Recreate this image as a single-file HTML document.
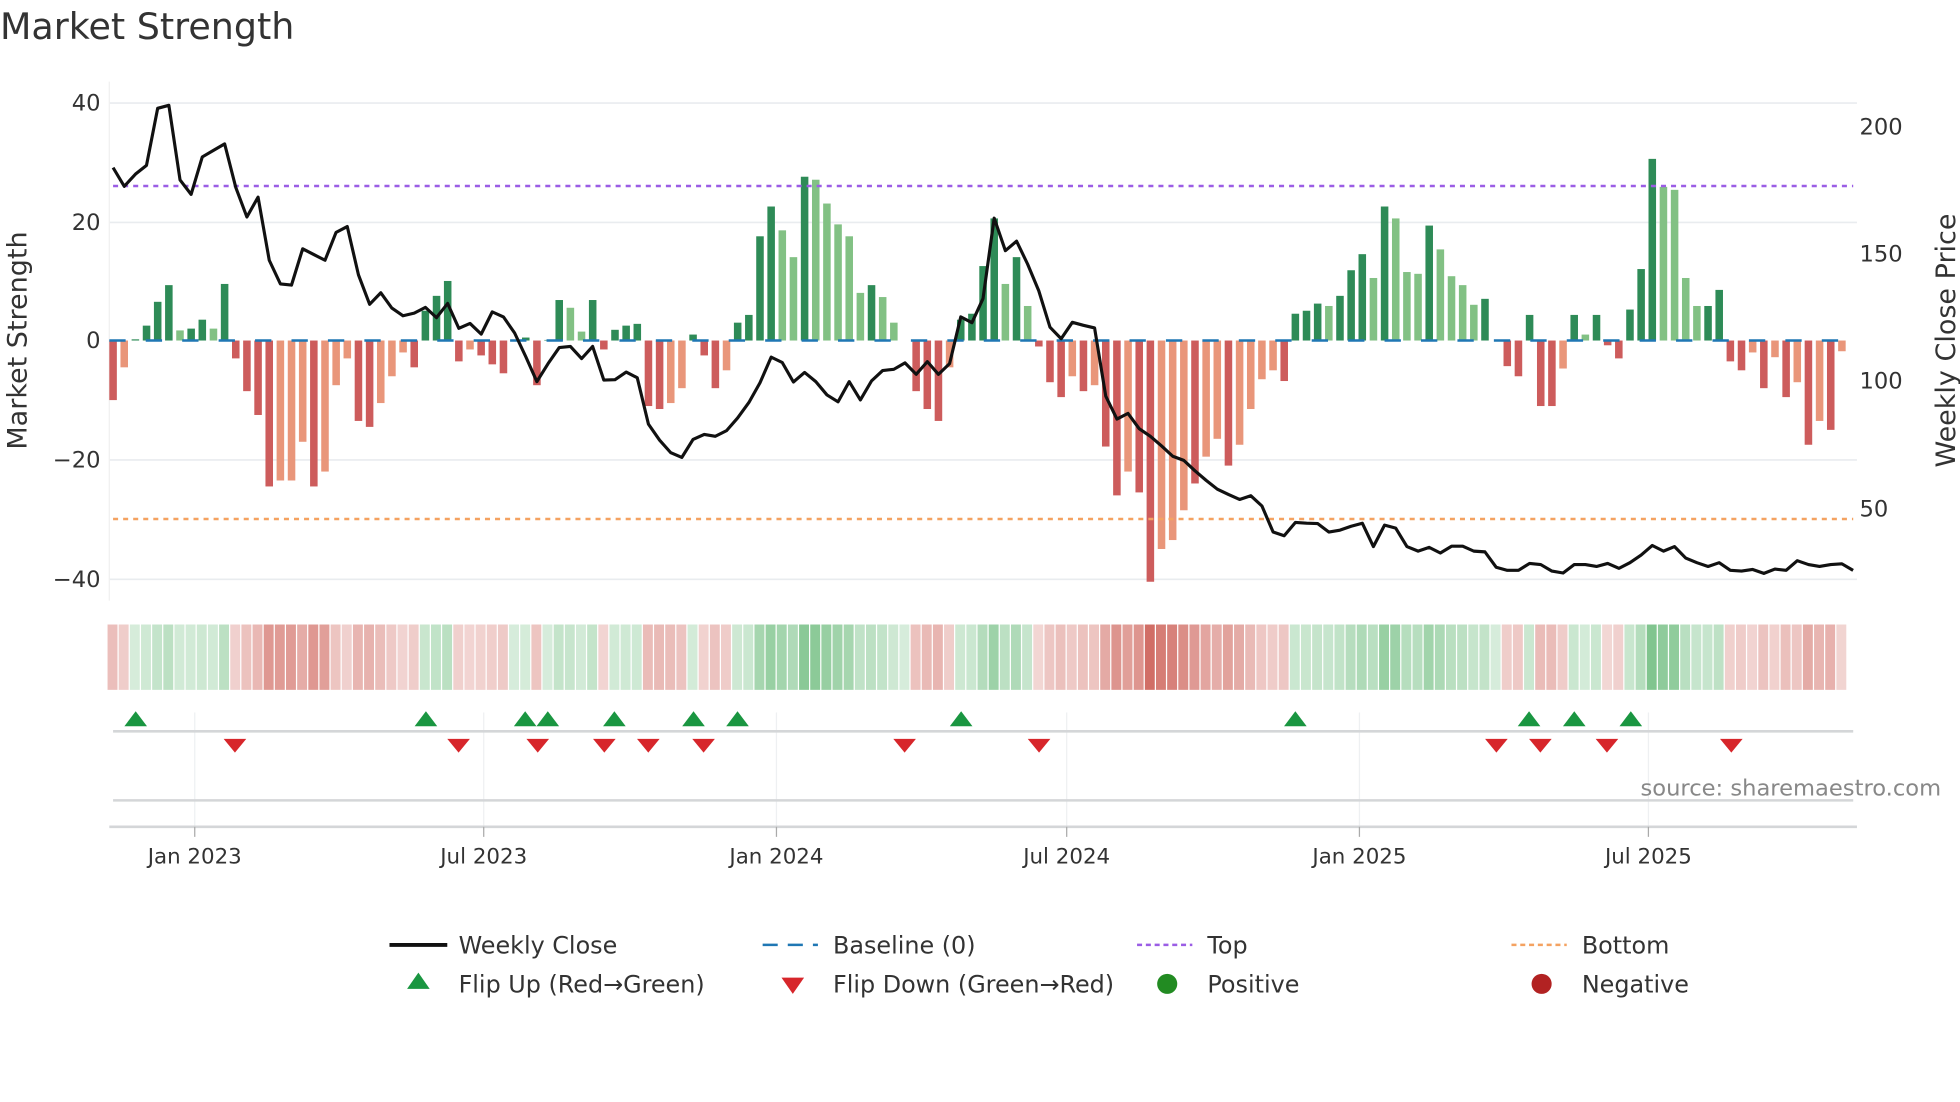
<!DOCTYPE html>
<html><head><meta charset="utf-8"><style>
html,body{margin:0;padding:0;background:#fff;}
svg{display:block;}
text{font-family:"DejaVu Sans","Liberation Sans",sans-serif;fill:#333;}
</style></head><body>
<svg id="s" width="1960" height="1102" viewBox="0 0 1560 877" preserveAspectRatio="none" xmlns="http://www.w3.org/2000/svg">
<rect width="1560" height="877" fill="#fff"/>
<text x="0" y="31" font-size="29">Market Strength</text>
<g stroke="#e9ecef" stroke-width="1.3">
<line x1="87" x2="1478" y1="82" y2="82"/><line x1="87" x2="1478" y1="177" y2="177"/>
<line x1="87" x2="1478" y1="366" y2="366"/><line x1="87" x2="1478" y1="461" y2="461"/>
</g>
<line x1="87" x2="87" y1="65" y2="478" stroke="#f0f0f0"/>
<g font-size="18" text-anchor="end">
<text x="80" y="88">40</text><text x="80" y="183">20</text><text x="80" y="277">0</text>
<text x="80" y="372">−20</text><text x="80" y="467">−40</text>
</g>
<g font-size="18">
<text x="1480" y="107">200</text><text x="1480" y="208">150</text><text x="1480" y="309">100</text><text x="1480" y="411">50</text>
</g>
<text transform="translate(21,271) rotate(-90)" font-size="21.5" text-anchor="middle">Market Strength</text>
<text transform="translate(1556,271) rotate(-90)" font-size="21.5" text-anchor="middle">Weekly Close Price</text>
<g id="bars"></g>
<line x1="87" x2="1475" y1="271" y2="271" stroke="#1f77b4" stroke-width="2" stroke-dasharray="13,16"/>
<line x1="90" x2="1475" y1="148" y2="148" stroke="#9b5de5" stroke-width="2" stroke-dasharray="4,4"/>
<line x1="90" x2="1475" y1="413" y2="413" stroke="#f4a261" stroke-width="2" stroke-dasharray="4,4"/>
<polyline id="pl" fill="none" stroke="#111" stroke-width="2.5" stroke-linejoin="round"/>
<g id="heat"></g>
<g stroke="#eef0f2" stroke-width="1">
<line x1="155" x2="155" y1="567" y2="660"/><line x1="385" x2="385" y1="567" y2="660"/>
<line x1="618" x2="618" y1="567" y2="660"/><line x1="849" x2="849" y1="567" y2="660"/>
<line x1="1082" x2="1082" y1="567" y2="660"/><line x1="1312" x2="1312" y1="567" y2="660"/>
</g>
<line x1="90" x2="1475" y1="582" y2="582" stroke="#d4d6d8" stroke-width="2"/>
<line x1="90" x2="1475" y1="637" y2="637" stroke="#d4d6d8" stroke-width="2"/>
<line x1="87" x2="1478" y1="658" y2="658" stroke="#d4d6d8" stroke-width="2"/>
<g stroke="#aaa" stroke-width="1">
<line x1="155" x2="155" y1="658" y2="666"/><line x1="385" x2="385" y1="658" y2="666"/>
<line x1="618" x2="618" y1="658" y2="666"/><line x1="849" x2="849" y1="658" y2="666"/>
<line x1="1082" x2="1082" y1="658" y2="666"/><line x1="1312" x2="1312" y1="658" y2="666"/>
</g>
<g id="flips"></g>
<g font-size="17" text-anchor="middle">
<text x="155" y="687">Jan 2023</text><text x="385" y="687">Jul 2023</text><text x="618" y="687">Jan 2024</text>
<text x="849" y="687">Jul 2024</text><text x="1082" y="687">Jan 2025</text><text x="1312" y="687">Jul 2025</text>
</g>
<text x="1545" y="633" font-size="18" text-anchor="end" style="fill:#888">source: sharemaestro.com</text>
<g font-size="19">
<line x1="310" x2="356" y1="752" y2="752" stroke="#111" stroke-width="3"/>
<text x="365" y="759">Weekly Close</text>
<line x1="607" x2="651" y1="752" y2="752" stroke="#1f77b4" stroke-width="2" stroke-dasharray="12,8"/>
<text x="663" y="759">Baseline (0)</text>
<line x1="905" x2="949" y1="752" y2="752" stroke="#9b5de5" stroke-width="2" stroke-dasharray="4,3"/>
<text x="961" y="759">Top</text>
<line x1="1203" x2="1247" y1="752" y2="752" stroke="#f4a261" stroke-width="2" stroke-dasharray="4,3"/>
<text x="1259" y="759">Bottom</text>
<polygon points="333,774 342,787 324,787" fill="#1a9641"/>
<text x="365" y="790">Flip Up (Red→Green)</text>
<polygon points="622,778 640,778 631,791" fill="#d7262b"/>
<text x="663" y="790">Flip Down (Green→Red)</text>
<circle cx="929" cy="783" r="8" fill="#228b22"/>
<text x="961" y="790">Positive</text>
<circle cx="1227" cy="783" r="8" fill="#b22222"/>
<text x="1259" y="790">Negative</text>
</g>
</svg>
<script>
var b1=[[-10,0],[-4.5,1],[0.2,0],[2.5,0],[6.5,0],[9.3,0],[1.7,1],[2,0],[3.5,0],[2,1],[9.5,0],[-3,0],[-8.5,0],[-12.5,0],[-24.5,0],[-23.5,1],[-23.5,1],[-17,1],[-24.5,0],[-22,1],[-7.5,1],[-3,1],[-13.5,0],[-14.5,0],[-10.5,1],[-6,1],[-2,1],[-4.5,0],[5,0],[7.5,0],[10,0],[-3.5,0],[-1.5,1],[-2.5,0],[-4,0],[-5.5,0],[0,0],[0.5,0],[-7.5,0],[0.1,0],[6.8,0],[5.5,1],[1.5,1],[6.8,0],[-1.5,0],[1.8,0],[2.5,0],[2.8,0],[-11,0],[-11.5,0],[-10.5,1],[-8,1],[1,0],[-2.5,0],[-8,0],[-5,1],[3,0],[4.3,0],[17.5,0],[22.5,0],[18.5,1],[14,1],[27.5,0],[27,1],[23,1],[19.5,1],[17.5,1],[8,1],[9.3,0],[7.3,1],[3,1],[0,0],[-8.5,0],[-11.5,0],[-13.5,0],[-4.5,1],[3.5,0],[4.5,0],[12.5,0]];
var v2=[20.5,9.5,14,5.8,-1,-7,-9.5,-6,-8.5,-7.5,-17.8,-26,-22,-25.5,-40.5,-35,-33.5,-28.5,-24,-19.5,-16.5,-21,-17.5,-11.5,-6.5,-5,-6.8,4.5,5,6.2,5.8,7.5,11.8,14.5,10.5,22.5,20.5,11.5,11.2,19.3,15.3,10.8,9.3,6,7,0,-4.3,-6,4.3,-11,-11,-4.7,4.3,1,4.3,-0.8,-3,5.2,12,30.5,25.8,25.3,10.5,5.8,5.8,8.5,-3.5,-5,-2,-8,-2.8,-9.5,-7,-17.5,-13.5,-15,-1.8];
var l2="0101000101"+"0010011101"+"1011110000"+"1000101110"+"1111000000"+"0101000000"+"1111000010"+"1010101";
var bars=b1.slice();for(var i=0;i<v2.length;i++)bars.push([v2[i],+l2[i]]);
var n=bars.length,x0=90,dx=(1466-90)/(n-1),h="",ht="";
for(var i=0;i<n;i++){var v=bars[i][0],L=bars[i][1],x=x0+i*dx;
 var c=v>=0?(L?"#82c184":"#2e8b57"):(L?"#e9967a":"#cd5c5c");
 var y1=271,y2=271-v*4.74;h+='<rect x="'+(x-3)+'" y="'+Math.min(y1,y2)+'" width="6" height="'+Math.abs(y2-y1)+'" fill="'+c+'"/>';
 var a=Math.min(0.9,0.22+Math.abs(v)/40*0.6);
 var hc=v>=0?"rgba(70,170,90,"+a+")":"rgba(200,80,70,"+a+")";
 ht+='<rect x="'+(x-4.4)+'" y="497" width="7.9" height="52" fill="'+hc+'"/>';}
document.getElementById("bars").innerHTML=h;document.getElementById("heat").innerHTML=ht;
var p1=[438,487,455,432,283,275,470,508,410,393,376,490,567,515,680,742,745,650,665,680,607,592,718,795,765,805,825,818,803,830,793,858,845,873,815,828,870,932,997,950,908,905,937,905,993,992,972,987,1108,1150,1183,1195,1148,1135,1140,1125,1092,1052,1000,933,947,998,973,997,1032,1050,997,1045,995,968,965,948,978,945,978,950,828,843,780];
var p2=[570,655,630,690,760,855,885,842,850,857,1035,1095,1080,1120,1140,1165,1192,1203,1230,1255,1278,1292,1305,1295,1322,1390,1400,1365,1367,1368,1390,1385,1375,1367,1428,1372,1380,1428,1440,1430,1445,1427,1427,1440,1442,1482,1490,1490,1472,1475,1492,1497,1475,1475,1480,1472,1485,1470,1450,1425,1440,1428,1458,1470,1480,1470,1490,1492,1488,1498,1487,1490,1465,1475,1480,1475,1473,1490];
var pts=p1.concat(p2),s="";for(var i=0;i<pts.length;i++){s+=(x0+i*dx).toFixed(1)+","+(pts[i]/3.283).toFixed(1)+" ";}
document.getElementById("pl").setAttribute("points",s);
var up=[108,339,418,436,489,552,587,765,1031,1217,1253,1298],dn=[187,365,428,481,516,560,720,827,1191,1226,1279,1378],f="";
up.forEach(function(x){f+='<polygon points="'+x+',566 '+(x+9)+',578 '+(x-9)+',578" fill="#1a9641"/>';});
dn.forEach(function(x){f+='<polygon points="'+(x-9)+',588 '+(x+9)+',588 '+x+',599" fill="#d7262b"/>';});
document.getElementById("flips").innerHTML=f;
</script>
</body></html>
